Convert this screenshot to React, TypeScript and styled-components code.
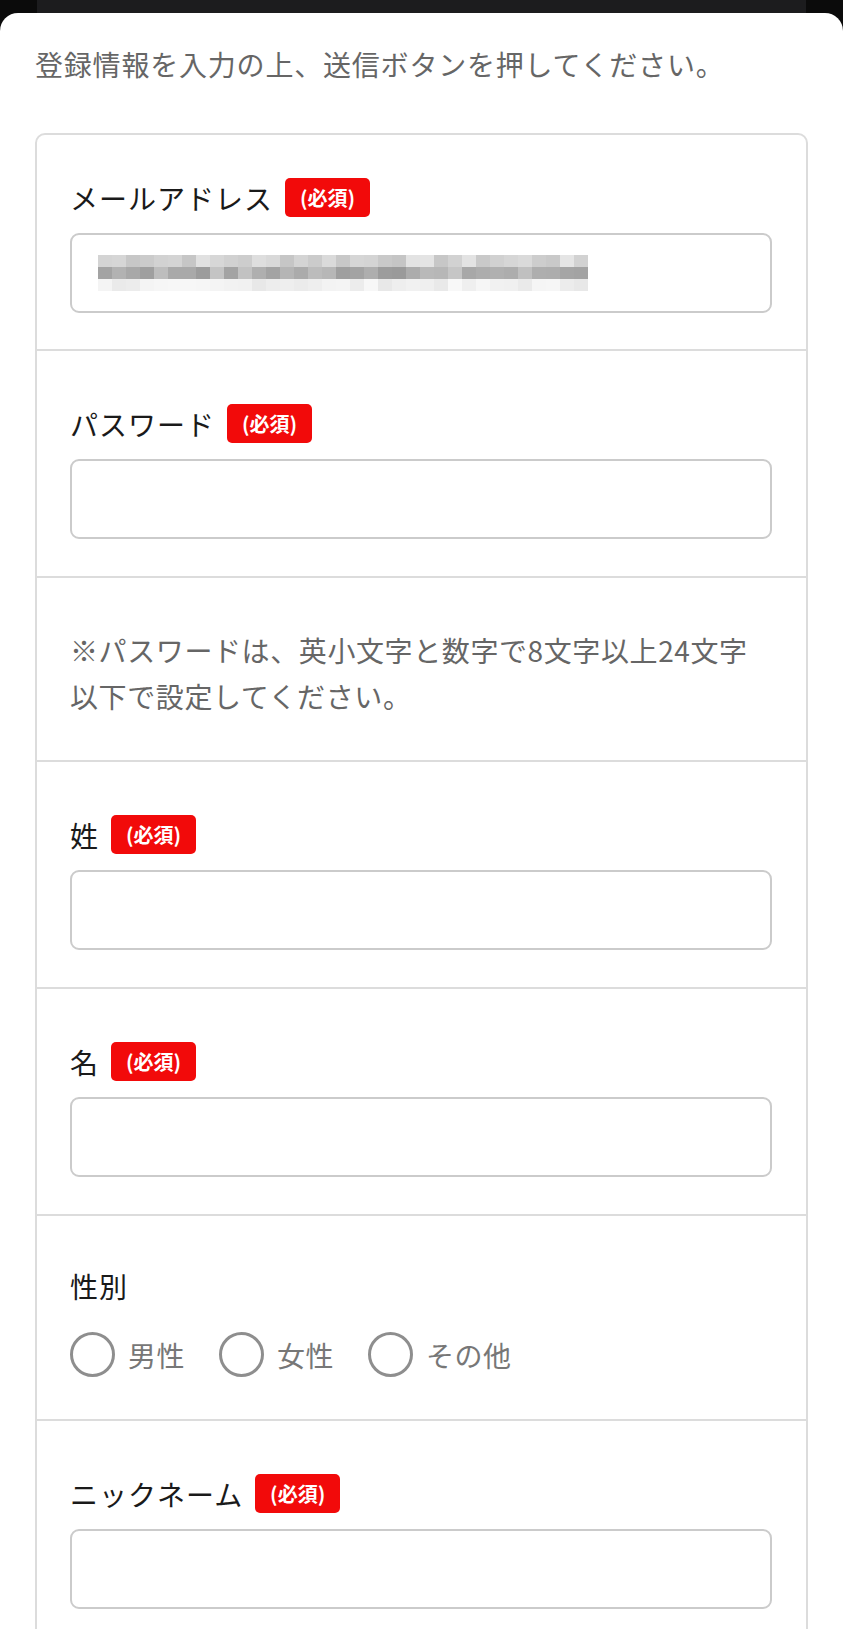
import React from "react";
import styled, { createGlobalStyle } from "styled-components";

const GlobalStyle = createGlobalStyle`
    html, body {
        margin: 0;
        padding: 0;
        background: #0b0b0b;
    }
    body {
        font-family: "Noto Sans CJK JP", "Noto Sans", sans-serif;
        -webkit-font-smoothing: antialiased;
    }
    * {
        box-sizing: border-box;
    }
`;

const Screen = styled.div`
    height: 1629px;
    overflow: hidden;
    background: #0b0b0b;
`;

// the page behind the modal sheet peeks out at the top
const Backdrop = styled.div`
    height: 13px;
    padding: 0 37px;
`;
const BehindCard = styled.div`
    height: 100%;
    background: #1c1c1e;
`;

const Sheet = styled.div`
    background: #fff;
    border-radius: 18px 18px 0 0;
    padding: 31px 35px 0 35px;
    min-height: 1616px;
`;

const Intro = styled.p`
    margin: 0 0 49px;
    font-size: 28px;
    line-height: 40px;
    letter-spacing: 0.8px;
    color: #666;
`;

const Card = styled.div`
    border: 2px solid #dcdcdc;
    border-radius: 10px;
    background: #fff;
`;

const Section = styled.div<{ $top?: number; $bottom?: number }>`
    padding: ${(p) => p.$top ?? 53}px 34px ${(p) => p.$bottom ?? 37}px 33px;
    & + & {
        border-top: 2px solid #dcdcdc;
    }
`;

const LabelRow = styled.div`
    display: flex;
    align-items: center;
    gap: 12px;
    height: 39px;
`;

const Label = styled.span`
    font-size: 28px;
    color: #1a1a1a;
    letter-spacing: 1px;
`;

const Badge = styled.span`
    display: inline-flex;
    align-items: center;
    justify-content: center;
    height: 39px;
    width: 85px;
    border-radius: 5px;
    background: #f20a0a;
    color: #fff;
    font-size: 20px;
    font-weight: 700;
`;

const Input = styled.div`
    margin-top: 16px;
    height: 80px;
    border: 2px solid #cbcbcb;
    border-radius: 9px;
    display: flex;
    align-items: center;
    padding-left: 26px;
`;

const Note = styled.p`
    margin: 0;
    font-size: 28px;
    line-height: 46px;
    letter-spacing: 0.6px;
    color: #666;
`;

const Radios = styled.div`
    display: flex;
    align-items: center;
    gap: 34px;
    margin-top: 27px;
`;

const RadioItem = styled.label`
    display: flex;
    align-items: center;
    gap: 13px;
    font-size: 28px;
    letter-spacing: 0.5px;
    color: #777;
`;

const Circle = styled.span`
    width: 45px;
    height: 45px;
    border-radius: 50%;
    border: 3px solid #8e8e8e;
    background: #fff;
`;

// pixelated (mosaic) email value
function Mosaic() {
    const cols = 35;
    const size = 14;
    const rows = [
        { base: 212, spread: 34 },
        { base: 176, spread: 48 },
        { base: 240, spread: 16 },
    ];
    let seed = 7;
    const rand = () => {
        seed = (seed * 9301 + 49297) % 233280;
        return seed / 233280;
    };
    const cells: React.ReactElement[] = [];
    rows.forEach((r, ri) => {
        for (let c = 0; c < cols; c++) {
            const v = Math.round(r.base - r.spread / 2 + rand() * r.spread);
            cells.push(
                <rect
                    key={`${ri}-${c}`}
                    x={c * size}
                    y={ri * 12}
                    width={size}
                    height={12}
                    fill={`rgb(${v},${v},${v})`}
                />
            );
        }
    });
    return (
        <svg width={cols * size} height={36} viewBox={`0 0 ${cols * size} 36`}>
            {cells}
        </svg>
    );
}

interface IField {
    label: string;
    required: boolean;
}

function Field({ label, required, first, children }: IField & { first?: boolean; children?: React.ReactNode }) {
    return (
        <Section $top={first ? 43 : 53} $bottom={first ? 36 : 37}>
            <LabelRow>
                <Label>{label}</Label>
                {required && <Badge>(必須)</Badge>}
            </LabelRow>
            <Input>{children}</Input>
        </Section>
    );
}

function App() {
    return (
        <Screen>
            <GlobalStyle />
            <Backdrop>
                <BehindCard />
            </Backdrop>
            <Sheet>
                <Intro>登録情報を入力の上、送信ボタンを押してください。</Intro>
                <Card>
                    <Field label="メールアドレス" required first>
                        <Mosaic />
                    </Field>
                    <Field label="パスワード" required />
                    <Section $top={49} $bottom={41}>
                        <Note>
                            ※パスワードは、英小文字と数字で8文字以上24文字
                            <br />
                            以下で設定してください。
                        </Note>
                    </Section>
                    <Field label="姓" required />
                    <Field label="名" required />
                    <Section $top={50} $bottom={42}>
                        <LabelRow>
                            <Label>性別</Label>
                        </LabelRow>
                        <Radios>
                            {["男性", "女性", "その他"].map((g) => (
                                <RadioItem key={g}>
                                    <Circle />
                                    {g}
                                </RadioItem>
                            ))}
                        </Radios>
                    </Section>
                    <Field label="ニックネーム" required />
                </Card>
            </Sheet>
        </Screen>
    );
}

export default App;
